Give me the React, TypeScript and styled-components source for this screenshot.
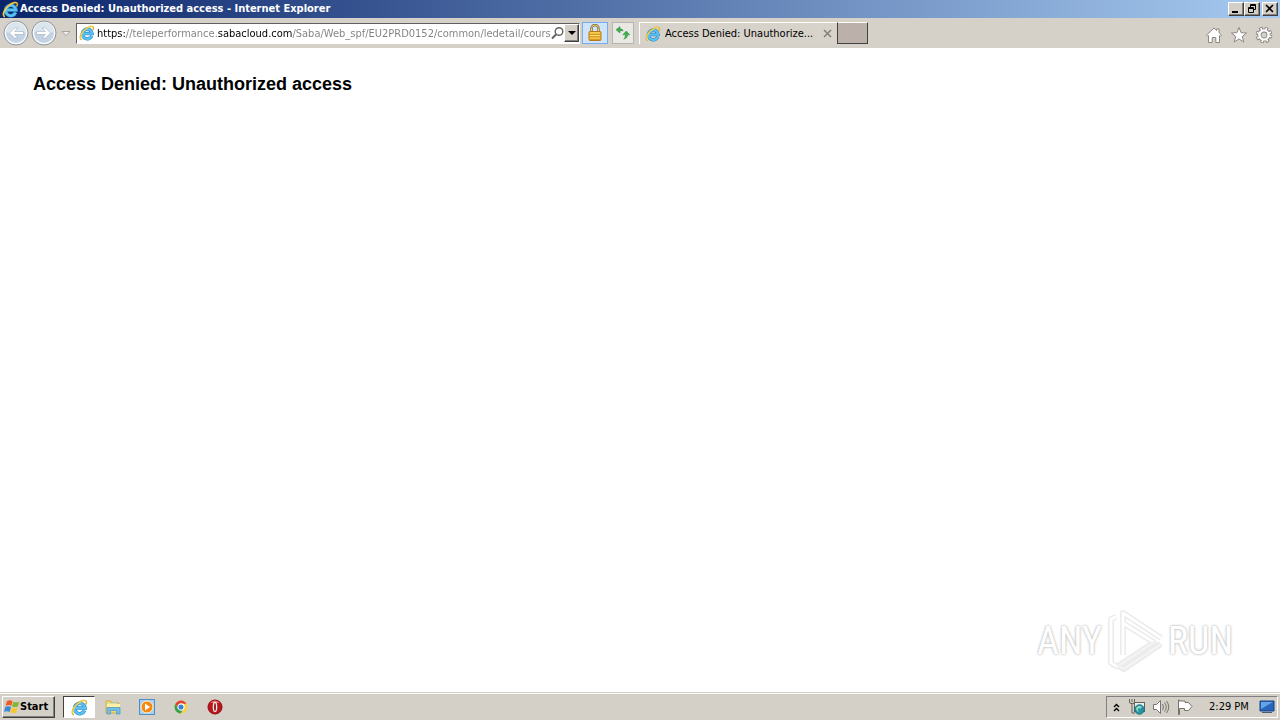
import React from 'react';
import styled, { createGlobalStyle, css } from 'styled-components';

const Global = createGlobalStyle`
  *, *::before, *::after { box-sizing: border-box; }
  body { margin: 0; background: #fff; color: #000; font: 11px/14px "DejaVu Sans Condensed", "DejaVu Sans", sans-serif; }
  button, input { font: inherit; color: inherit; margin: 0; padding: 0; border: 0; background: none; }
  svg { display: block; flex: none; }
`;

const raised = css`
  border: 1px solid;
  border-color: #fff #404040 #404040 #fff;
  box-shadow: inset -1px -1px 0 #808080;
  background: #d4d0c8;
`;

const Screen = styled.div`
  display: flex;
  flex-direction: column;
  min-height: 100vh;
`;

const TitleBar = styled.header`
  display: flex;
  align-items: center;
  height: 18px;
  padding: 0 2px;
  gap: 1px;
  background: linear-gradient(90deg, #0a246a, #a6caf0);
`;

const Title = styled.div`
  flex: 1;
  color: #fff;
  font-weight: bold;
  white-space: nowrap;
`;

const WindowButtons = styled.div`
  display: flex;
`;

const WindowButton = styled.button<{ $apart?: boolean }>`
  ${raised}
  display: flex;
  align-items: center;
  justify-content: center;
  width: 16px;
  height: 14px;
  margin-left: ${(p) => (p.$apart ? 2 : 0)}px;
`;

const Toolbar = styled.nav`
  display: flex;
  align-items: center;
  height: 30px;
  padding: 0 4px 0 2px;
  background: #d5d0c8;
`;

const HistoryButtons = styled.div`
  display: flex;
  align-items: center;
  width: 74px;
`;

const IconButton = styled.button<{ $width?: number }>`
  display: flex;
  align-items: center;
  justify-content: center;
  width: ${(p) => p.$width ?? 24}px;
  height: 28px;
`;

const AddressBar = styled.form`
  display: flex;
  align-items: center;
  width: 504px;
  height: 21px;
  padding: 0 0 0 2px;
  background: #fff;
  border: 1px solid;
  border-color: #606060 #fff #fff #606060;
`;

const AddressInput = styled.input`
  flex: 1;
  min-width: 0;
  height: 18px;
  margin-left: 2px;
  color: #777;
  outline: none;
  background: linear-gradient(90deg, #000 29px, #808080 29px 120px, #000 120px 195px, #808080 195px);
  background-clip: text;
  -webkit-text-fill-color: transparent;
`;

const DropButton = styled.button`
  ${raised}
  display: flex;
  align-items: center;
  justify-content: center;
  width: 15px;
  height: 18px;
`;

const StatusButton = styled.button<{ $active?: boolean }>`
  display: flex;
  align-items: center;
  justify-content: center;
  width: ${(p) => (p.$active ? 26 : 22)}px;
  height: 22px;
  margin-left: ${(p) => (p.$active ? 2 : 4)}px;
  background: ${(p) => (p.$active ? '#cfe3fb' : '#e9e8e5')};
  border: 1px solid ${(p) => (p.$active ? '#78aaf0' : '#b8b5af')};
`;

const Tab = styled.div`
  display: flex;
  align-items: center;
  width: 198px;
  height: 22px;
  margin-left: 5px;
  padding-left: 5px;
  gap: 4px;
  border-left: 1px solid #fff;
  border-top: 1px solid #fff;
  background: #d7d2ca;
`;

const TabTitle = styled.span`
  flex: 1;
  white-space: nowrap;
`;

const NewTab = styled.button`
  width: 31px;
  height: 22px;
  border: 1px solid;
  border-color: #fff #404040 #404040 #404040;
  background: #bbb0aa;
`;

const Tools = styled.div`
  display: flex;
  gap: 1px;
  margin-left: auto;
  padding-top: 3px;
`;

const Page = styled.main`
  position: relative;
  flex: 1;
  padding: 25px 33px;
`;

const Heading = styled.h1`
  margin: 0;
  font: bold 18px/22px "Liberation Sans", Arial, sans-serif;
`;

const Watermark = styled.div`
  position: absolute;
  right: 47px;
  bottom: 19px;
  display: flex;
  align-items: center;
  gap: 3px;
  color: #fff;
  font: 38px/64px "Liberation Sans Narrow", "Roboto Condensed", sans-serif;
  text-shadow: 0 0 3px #bbb, 0 0 2px #ccc;
`;

const Taskbar = styled.footer`
  display: flex;
  align-items: center;
  height: 28px;
  padding: 1px 2px 0;
  background: #d4d0c8;
  border-top: 1px solid #d4d0c8;
  box-shadow: inset 0 1px 0 #fff;
`;

const StartButton = styled.button`
  ${raised}
  display: flex;
  align-items: center;
  width: 53px;
  height: 22px;
  padding-left: 1px;
  font-weight: bold;
`;

const TaskButtons = styled.div`
  display: flex;
  align-items: center;
  gap: 2px;
  margin-left: 8px;
`;

const TaskButton = styled.button<{ $active?: boolean }>`
  display: flex;
  align-items: center;
  justify-content: center;
  width: 32px;
  height: 22px;
  ${(p) =>
    p.$active &&
    css`
      background: #fff;
      border: 1px solid;
      border-color: #404040 #fff #fff #404040;
    `}
`;

const Tray = styled.div`
  display: flex;
  align-items: center;
  height: 22px;
  margin-left: auto;
  width: 172px;
  padding-left: 5px;
  border: 1px solid;
  border-color: #808080 #fff #fff #808080;
`;

const TrayButton = styled.button`
  display: flex;
  align-items: center;
  justify-content: center;
  width: 24px;
  height: 20px;
  &:first-child { width: 8px; margin-right: 5px; }
  &:last-child { width: 20px; margin-left: auto; }
`;

const Clock = styled.time`
  margin-left: 12px;
  white-space: nowrap;
`;

const ExplorerIcon = ({ size = 17 }: { size?: number }) => (
  <svg width={size} height={size} viewBox="0 0 18 18" fill="none" aria-hidden="true">
    <path d="M14.4 12.2A5.5 5.5 0 1 1 14.8 9.6H5" stroke="#2588cb" strokeWidth="3.8" />
    <path d="M14.4 12.2A5.5 5.5 0 1 1 14.8 9.6H5" stroke="#5cc0f0" strokeWidth="2.6" />
    <path d="M3.2 16.6C-.2 16 1.2 10 6.2 5.4 10.6 1.4 16 .2 16.3 3.2c.1 1-.3 1.8-.8 2.6" stroke="#e5b52c" strokeWidth="1.6" />
    <path d="M2.5 15.4C1 13.6 3 9 6.8 5.7 10.4 2.5 14.8 1 15.6 2.5" stroke="#ffe779" strokeWidth=".8" />
  </svg>
);

const HistoryIcons = ({ forward = false }: { forward?: boolean }) => (
  <svg width="26" height="26" viewBox="0 0 26 26" aria-hidden="true">
    <circle cx="13" cy="13" r="12" fill="#c3c9cf" stroke="#8f969d" />
    <circle cx="13" cy="13" r="10.6" fill="#c3d3e3" stroke="#f8fbff" strokeWidth="1.3" />
    <path d="M3 12a10 10 0 0 1 20 0q-10 4-20 0" fill="#dbe5ee" />
    <path
      d={forward ? 'M5.5 11.5h9L11 8h3.4l5.2 5-5.2 5H11l3.5-3.5h-9z' : 'M20.5 11.5h-9L15 8h-3.4l-5.2 5 5.2 5H15l-3.5-3.5h9z'}
      fill="#fff" stroke="#9fb0c0" strokeWidth=".6"
    />
  </svg>
);

const App = () => (
  <Screen>
    <Global />
    <TitleBar>
      <ExplorerIcon />
      <Title>Access Denied: Unauthorized access - Internet Explorer</Title>
      <WindowButtons>
        <WindowButton aria-label="Minimize">
          <svg width="10" height="10"><path d="M1 8h6" stroke="#000" strokeWidth="2" /></svg>
        </WindowButton>
        <WindowButton aria-label="Restore">
          <svg width="10" height="10" fill="none" stroke="#000"><path d="M3.5 3V.5h5v5H7M3 1.5h6M1.5 3.5h5v5h-5zM1 4.5h6" /></svg>
        </WindowButton>
        <WindowButton $apart aria-label="Close">
          <svg width="10" height="10" stroke="#000" strokeWidth="1.6"><path d="m1 1 7 7M8 1 1 8" /></svg>
        </WindowButton>
      </WindowButtons>
    </TitleBar>

    <Toolbar>
      <HistoryButtons>
        <IconButton $width={28} aria-label="Back"><HistoryIcons /></IconButton>
        <IconButton $width={28} aria-label="Forward"><HistoryIcons forward /></IconButton>
        <IconButton $width={16} aria-label="Recent pages">
          <svg width="10" height="7"><path d="M1 1.5h8L5 5.7z" fill="#eee" stroke="#aaa59f" /></svg>
        </IconButton>
      </HistoryButtons>
      <AddressBar onSubmit={(e) => e.preventDefault()}>
        <ExplorerIcon size={16} />
        <AddressInput
          aria-label="Address"
          spellCheck={false}
          defaultValue="https://teleperformance.sabacloud.com/Saba/Web_spf/EU2PRD0152/common/ledetail/cours"
        />
        <svg width="13" height="14" fill="none" stroke="#65625e" aria-hidden="true">
          <circle cx="8" cy="5.5" r="3.8" strokeWidth="1.4" /><path d="m5 8.5-4 4" strokeWidth="2" />
        </svg>
        <DropButton type="button" aria-label="Show addresses">
          <svg width="8" height="5"><path d="M0 0h8L4 4z" /></svg>
        </DropButton>
      </AddressBar>
      <StatusButton $active aria-label="Security report">
        <svg width="16" height="18" fill="none">
          <path d="M4.5 9V4.5a3.5 3.5 0 0 1 7 0V9" stroke="#806b32" strokeWidth="2.4" />
          <path d="M4.5 9V4.5a3.5 3.5 0 0 1 7 0V9" stroke="#e9cf77" />
          <rect x="2" y="7.5" width="12" height="9" rx="1" fill="#efb625" stroke="#b57a18" />
          <path d="M3 9h10M3 11.5h10M3 14h10" stroke="#ffe16b" />
          <path d="M3 10.3h10M3 12.8h10M3 15.3h10" stroke="#d4922a" />
        </svg>
      </StatusButton>
      <StatusButton aria-label="Refresh">
        <svg width="16" height="16" fill="#3fae49" stroke="#2b8a38" strokeWidth=".5">
          <path d="M5 1.5v2.3q2.6-.2 3.2 2.2Q7 5.4 5 5.8V8L1 4.8z" />
          <path d="m11.3 6 3.5 3.8h-2.3c0 2.7-1.4 4-3.8 4.2 1.3-1 1.7-2.2 1.7-4.2H7.8z" />
        </svg>
      </StatusButton>
      <Tab>
        <ExplorerIcon size={16} />
        <TabTitle>Access Denied: Unauthorize...</TabTitle>
        <IconButton $width={24} aria-label="Close tab">
          <svg width="9" height="9" stroke="#85807b" strokeWidth="1.6"><path d="m1 1 7 7M8 1 1 8" /></svg>
        </IconButton>
      </Tab>
      <NewTab aria-label="New tab" />
      <Tools>
        <IconButton aria-label="Home">
          <svg width="18" height="18" fill="#fff" stroke="#8c8782">
            <path d="M1.5 9.2 9 2l2.6 2.5V3h2.5v3.8l2.4 2.4-1.2 1.2-.8-.8v6.9H10.8v-5H7.2v5H3.5V9.6l-.8.8z" />
          </svg>
        </IconButton>
        <IconButton aria-label="Favorites">
          <svg width="18" height="18" fill="#fff" stroke="#8c8782"><path d="m9 1.5 2.1 5.2 5.5.3-4.3 3.5 1.5 5.5L9 12.9 4.2 16l1.5-5.5L1.4 7l5.5-.3z" /></svg>
        </IconButton>
        <IconButton aria-label="Tools">
          <svg width="18" height="18" viewBox="0 0 18 18" fill="none">
            <circle cx="9" cy="9" r="6.3" stroke="#85807b" strokeWidth="4" strokeDasharray="2.9 2.048" />
            <circle cx="9" cy="9" r="4.6" stroke="#85807b" strokeWidth="4" />
            <circle cx="9" cy="9" r="6.3" stroke="#fff" strokeWidth="2.6" strokeDasharray="1.5 3.448" strokeDashoffset="-.7" />
            <circle cx="9" cy="9" r="4.6" stroke="#fff" strokeWidth="2.4" />
          </svg>
        </IconButton>
      </Tools>
    </Toolbar>

    <Page>
      <Heading>Access Denied: Unauthorized access</Heading>
      <Watermark>
        <span>ANY</span>
        <svg width="60" height="64" viewBox="0 0 60 64" fill="none" strokeLinejoin="round" aria-hidden="true">
          <path d="M11 8 6 10v44l7 4M18 46V4l38 25M18 14l32 20M56 35 19 60l-6-3 38-25" stroke="#dedede" strokeWidth="6" opacity=".5" />
          <path d="M11 8 6 10v44l7 4M18 46V4l38 25M18 14l32 20M56 35 19 60l-6-3 38-25" stroke="#e6e6e6" strokeWidth="4.4" />
          <path d="M11 8 6 10v44l7 4M18 46V4l38 25M18 14l32 20" stroke="#fff" strokeWidth="3" />
          <path d="M56 35 19 60l-6-3 38-25" stroke="#f3f3f3" strokeWidth="3" />
        </svg>
        <span>RUN</span>
      </Watermark>
    </Page>

    <Taskbar>
      <StartButton>
        <svg width="16" height="16" aria-hidden="true">
          <path d="M3 2q3-1.5 5.5.2L7.3 7Q5 5.3 1.6 6.8z" fill="#f05b22" />
          <path d="M9.3 2.7q3 1.3 6 0L13.8 7.4q-3 1.2-5.7 0z" fill="#80b833" />
          <path d="M1.4 7.8q3-1.4 5.6.2l-1.3 5Q3.2 11.4 0 12.8z" fill="#3988d5" />
          <path d="M7.9 8.5q3 1.3 5.7.1l-1.4 4.9q-3 1.2-5.6-.1z" fill="#fac62d" />
        </svg>
        Start
      </StartButton>
      <TaskButtons>
        <TaskButton $active aria-label="Internet Explorer"><ExplorerIcon /></TaskButton>
        <TaskButton aria-label="File Explorer">
          <svg width="18" height="18">
            <path d="M2 3h5l1 2h7v10H2z" fill="#f5d975" stroke="#d1ae45" />
            <path d="M4 5h9v4H4z" fill="#bfe3bd" />
            <path d="M3 6h13v3H3z" fill="#fff0a5" />
            <path d="M3 9.5h13V16h-3.5v-3.5h-6V16H3z" fill="#74bce4" stroke="#4b9fce" strokeWidth=".8" />
          </svg>
        </TaskButton>
        <TaskButton aria-label="Media Player">
          <svg width="18" height="18">
            <rect x="1.5" y="1.5" width="15" height="15" fill="#a7d1f2" stroke="#4e8fc8" />
            <circle cx="9" cy="9" r="6" fill="#f58a13" stroke="#fff0ce" />
            <path d="m7 5.5 5 3.5-5 3.5z" fill="#fff" />
          </svg>
        </TaskButton>
        <TaskButton aria-label="Chrome">
          <svg width="16" height="16">
            <circle cx="8" cy="8" r="6.5" fill="#f8d23c" />
            <path d="M2.4 4.8A6.5 6.5 0 0 1 13.6 4.8H8L5.2 9.7z" fill="#df4433" />
            <path d="M2.4 4.8A6.5 6.5 0 0 0 7.7 14.5L10.7 9.6H5.2z" fill="#35a052" />
            <circle cx="8" cy="8" r="3.1" fill="#387fdd" stroke="#fff" strokeWidth="1.1" />
          </svg>
        </TaskButton>
        <TaskButton aria-label="Opera">
          <svg width="16" height="16">
            <circle cx="8" cy="8" r="7" fill="#bd1519" stroke="#8a0b10" />
            <path d="M3 4q5-5 10 0" fill="#e96a66" />
            <ellipse cx="8" cy="8" rx="2.3" ry="5.2" fill="#eee" />
            <ellipse cx="8" cy="8" rx=".9" ry="4" fill="#8a0b10" />
          </svg>
        </TaskButton>
      </TaskButtons>
      <Tray>
        <TrayButton aria-label="Show hidden icons">
          <svg width="7" height="9" fill="none" stroke="#000" strokeWidth="1.4"><path d="m1 4 2.5-2.5L6 4M1 8l2.5-2.5L6 8" /></svg>
        </TrayButton>
        <TrayButton aria-label="Network">
          <svg width="18" height="18">
            <path d="M1.5 1v3q0 1.5 1.5 1.5h2Q6.500 5.500 6.500 4V1M4 1v3M4 6v9h3" fill="none" stroke="#65625e" />
            <rect x="6.500" y="4.500" width="10" height="9" fill="#e8f0f0" stroke="#65625e" />
            <circle cx="11.500" cy="11.500" r="4.700" fill="#2694a5" stroke="#16707e" />
            <path d="M8 10q3-4 6-1-2 3-3 1-2 1 0 4-3-1-3-4" fill="#8bd9bf" />
          </svg>
        </TrayButton>
        <TrayButton aria-label="Volume">
          <svg width="18" height="16" fill="none" stroke="#77736f">
            <path d="M1.500 5.500h3L8.500 1.500v13l-4-4h-3z" fill="#fff" /><path d="M10.500 5q2 3 0 6M12.500 3.500q3.500 4.500 0 9M14.500 2q4.500 6 0 12" />
          </svg>
        </TrayButton>
        <TrayButton aria-label="Action Center">
          <svg width="18" height="16" fill="#fff" stroke="#77736f"><path d="M2.500 1v14.500h1V9.500h5v2h4l3.500-4-3.500-4H9v-1.500H3.500V1z" /></svg>
        </TrayButton>
        <Clock dateTime="14:29">2:29 PM</Clock>
        <TrayButton aria-label="Show desktop">
          <svg width="16" height="14"><path d="M1 1h14v10H1z" fill="#2866bd" stroke="#164386" /><path d="M2 2h12L2 9z" fill="#63a4e8" /><path d="M3 12.500h10" stroke="#4a5d77" /></svg>
        </TrayButton>
      </Tray>
    </Taskbar>
  </Screen>
);

export default App;
